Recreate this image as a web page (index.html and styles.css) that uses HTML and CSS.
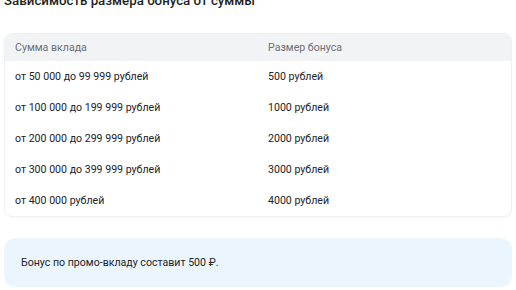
FILE: index.html
```html
<!DOCTYPE html>
<html lang="ru">
<head>
<meta charset="utf-8">
<link rel="stylesheet" href="styles.css">
</head>
<body>
<main class="page">
  <h2 class="title">Зависимость размера бонуса от суммы</h2>
  <div class="card">
    <div class="row head">
      <div class="cell">Сумма вклада</div>
      <div class="cell">Размер бонуса</div>
    </div>
    <div class="row">
      <div class="cell">от 50 000 до 99 999 рублей</div>
      <div class="cell">500 рублей</div>
    </div>
    <div class="row">
      <div class="cell">от 100 000 до 199 999 рублей</div>
      <div class="cell">1000 рублей</div>
    </div>
    <div class="row">
      <div class="cell">от 200 000 до 299 999 рублей</div>
      <div class="cell">2000 рублей</div>
    </div>
    <div class="row">
      <div class="cell">от 300 000 до 399 999 рублей</div>
      <div class="cell">3000 рублей</div>
    </div>
    <div class="row">
      <div class="cell">от 400 000 рублей</div>
      <div class="cell">4000 рублей</div>
    </div>
  </div>
  <div class="note">Бонус по промо-вкладу составит 500 ₽.</div>
</main>
</body>
</html>
```
FILE: styles.css
```css
html, body {
  margin: 0;
  padding: 0;
  background: #fff;
}
body {
  font-family: Roboto, "Noto Sans", Arial, sans-serif;
  color: #222426;
  overflow: hidden;
}
.page {
  padding: 0 4px;
  margin-top: -8px;
}
.title {
  margin: 0 0 23px;
  font-size: 13.3px;
  line-height: 18px;
  font-weight: 500;
  color: #1d1f22;
}
.card {
  border: 1px solid #eef0f2;
  border-radius: 8px;
  overflow: hidden;
  box-shadow: 0 1px 2px rgba(0,0,0,0.03);
}
.row {
  display: grid;
  grid-template-columns: 1fr 1fr;
  height: 31px;
  align-items: center;
  font-size: 10.6px;
}
.row.head {
  height: 27px;
  background: #f2f3f5;
  color: #6b7079;
}
.cell {
  padding-left: 10px;
}
.note {
  margin-top: 21px;
  background: #ebf5fe;
  border-radius: 12px;
  height: 49px;
  display: flex;
  align-items: center;
  padding-left: 17px;
  font-size: 10.6px;
  color: #222426;
}
```
